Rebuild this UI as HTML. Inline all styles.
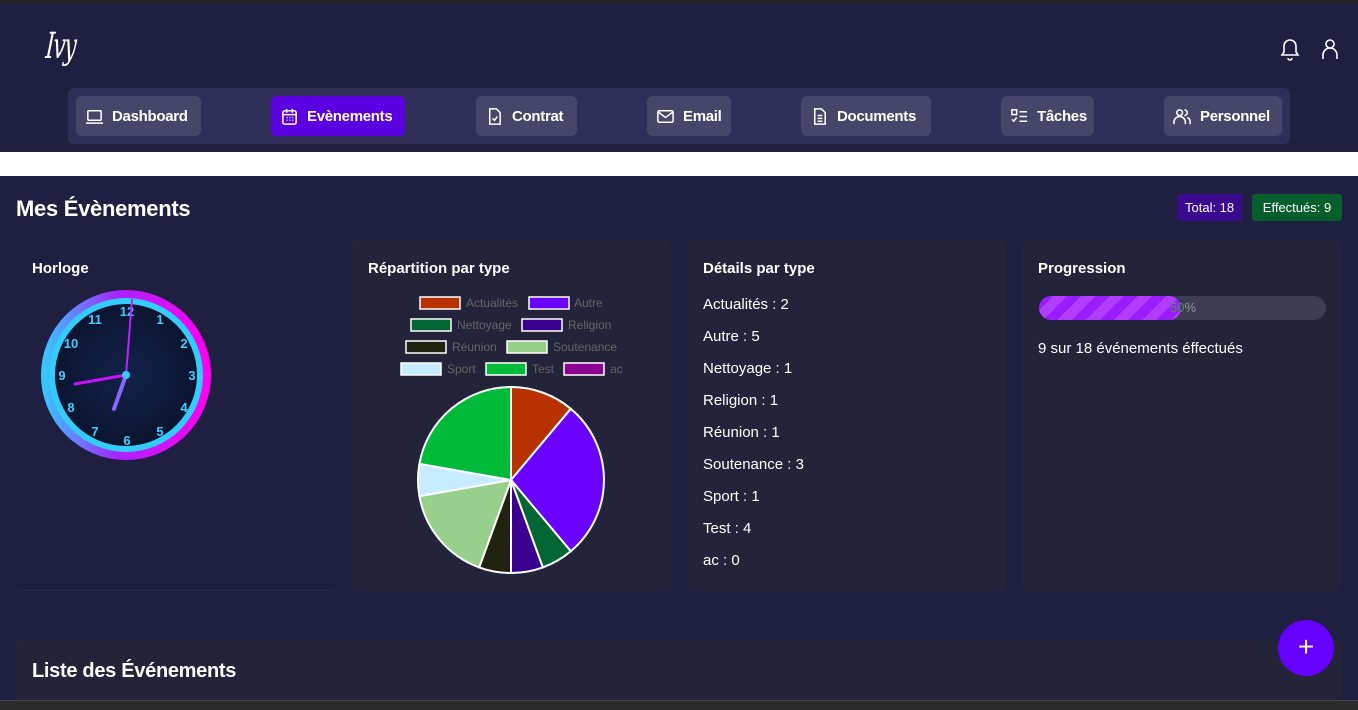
<!DOCTYPE html>
<html><head><meta charset="utf-8"><style>
*{margin:0;padding:0;box-sizing:border-box}
body{width:1358px;height:710px;overflow:hidden;background:#1f1f42;font-family:"Liberation Sans","DejaVu Sans",sans-serif;color:#fff;position:relative}
.abs{position:absolute}
.top{left:0;top:0;width:1358px;height:4px;background:#232323}
.nav{left:68px;top:88px;width:1222px;height:56px;background:#2f2f5a;border-radius:6px}
.btn{position:absolute;top:96px;height:40px;background:#46466a;border-radius:6px;display:flex;align-items:center;padding-left:9px;font-weight:bold;font-size:15px;letter-spacing:-0.3px}
.btn svg{width:19px;height:19px;margin-right:8px;fill:none;stroke:#fff;stroke-width:1.6}
.white{left:0;top:152px;width:1358px;height:24px;background:#fff}
.card{position:absolute;top:240px;width:319px;height:351px;background:#232339;border-radius:4px}
.card h3{position:absolute;left:16px;top:20px;font-size:15px;font-weight:bold}
.badge{position:absolute;top:194px;height:27px;border-radius:3px;font-size:13px;line-height:27px;padding:0 8px}
.det{position:absolute;left:16px;font-size:15px}
.leg{font-family:"Liberation Sans",sans-serif;font-size:12px;fill:#666}
</style></head><body>
<div class="abs top"></div>
<div class="abs" style="left:46px;top:26px;font-family:'DejaVu Serif','Liberation Serif',serif;font-style:italic;font-weight:normal;font-size:36px;transform:scaleX(0.6) skewX(-8deg);transform-origin:left;letter-spacing:-2px">Ivy</div>
<svg class="abs" style="left:1278px;top:36px" width="24" height="26" fill="none" stroke="#fff" stroke-width="1.6"><path d="M4 19h16l-2-3V10a6 6 0 0 0-12 0v6z"/><path d="M10 22a2 2 0 0 0 4 0"/></svg>
<svg class="abs" style="left:1320px;top:37px" width="20" height="24" fill="none" stroke="#fff" stroke-width="1.6"><circle cx="10" cy="7" r="4"/><path d="M3 22v-4a7 7 0 0 1 14 0v4"/></svg>
<div class="abs nav"></div>
<div class="btn" style="left:76px;width:125px"><svg viewBox="0 0 20 20"><rect x="3" y="4" width="14" height="10" rx="1"/><path d="M1 17h18"/></svg>Dashboard</div>
<div class="btn" style="left:271px;width:134px;background:#5b00e0"><svg viewBox="0 0 20 20"><rect x="3" y="4" width="14" height="14" rx="2"/><path d="M3 8h14M7 2v4M13 2v4M7 11h1M10 11h1M13 11h1M7 14h1M10 14h1M13 14h1"/></svg>Evènements</div>
<div class="btn" style="left:476px;width:101px"><svg viewBox="0 0 20 20"><path d="M5 2h7l4 4v12H5z"/><path d="M8 12l2 2 3-4"/></svg>Contrat</div>
<div class="btn" style="left:647px;width:84px"><svg viewBox="0 0 20 20"><rect x="2" y="4" width="16" height="12" rx="1.5"/><path d="M2 5l8 6 8-6"/></svg>Email</div>
<div class="btn" style="left:801px;width:130px"><svg viewBox="0 0 20 20"><path d="M5 2h7l4 4v12H5z"/><path d="M8 9h5M8 12h5M8 15h5"/></svg>Documents</div>
<div class="btn" style="left:1001px;width:93px"><svg viewBox="0 0 20 20"><rect x="2" y="3" width="5" height="5"/><path d="M2 13l2 2 3-4M10 5h8M10 10h8M10 15h8"/></svg>Tâches</div>
<div class="btn" style="left:1164px;width:118px"><svg viewBox="0 0 20 20"><circle cx="7" cy="6" r="3"/><path d="M1 18v-2a6 6 0 0 1 12 0v2M12 3a3 3 0 0 1 0 6M15 11a5 5 0 0 1 3 5v2"/></svg>Personnel</div>
<div class="abs white"></div>
<div class="abs" style="left:16px;top:196px;font-size:22px;font-weight:bold;letter-spacing:-0.3px">Mes Évènements</div>
<div class="badge" style="left:1177px;background:#3a0a8f">Total: 18</div>
<div class="badge" style="left:1252px;width:90px;background:#075e2d;text-align:center">Effectués: 9</div>

<div class="card" style="left:16px;background:#1f1f42;border-bottom:1px solid #2a2a48"><h3>Horloge</h3>
<svg class="abs" style="left:24px;top:48px" width="174" height="174">
<defs><linearGradient id="ring" x1="0" x2="1"><stop offset="0" stop-color="#33ccff"/><stop offset="0.45" stop-color="#aa22ff"/><stop offset="1" stop-color="#ff00ee"/></linearGradient>
<radialGradient id="dial"><stop offset="0" stop-color="#13224a"/><stop offset="1" stop-color="#0b1530"/></radialGradient></defs>
<circle cx="86" cy="87" r="85" fill="url(#ring)"/>
<circle cx="86" cy="87" r="77" fill="#33ccff"/>
<circle cx="86" cy="87" r="71" fill="url(#dial)"/>
<g fill="#44ccff" font-size="13" font-weight="bold" text-anchor="middle" font-family="Liberation Sans">
<text x="87" y="28">12</text><text x="120" y="36">1</text><text x="144" y="60">2</text><text x="152" y="92">3</text><text x="144" y="124">4</text><text x="120" y="148">5</text><text x="87" y="157">6</text><text x="55" y="148">7</text><text x="31" y="124">8</text><text x="22" y="92">9</text><text x="31" y="60">10</text><text x="55" y="36">11</text></g>
<line x1="86" y1="87" x2="92" y2="12" stroke="#bb22ff" stroke-width="2" stroke-linecap="round"/>
<line x1="86" y1="87" x2="35" y2="96" stroke="#cc11ff" stroke-width="3" stroke-linecap="round"/>
<line x1="86" y1="87" x2="74" y2="121" stroke="#8866ff" stroke-width="4" stroke-linecap="round"/>
<circle cx="86" cy="87" r="4" fill="#33ccff"/>
</svg></div>

<div class="card" style="left:352px"><h3>Répartition par type</h3>
<svg class="abs" style="left:0;top:0" width="319" height="351">
<g stroke="#fff" stroke-width="1.5">
<rect x="68" y="57" width="40" height="12" fill="#b83200"/><rect x="177" y="57" width="40" height="12" fill="#6a00ff"/>
<rect x="59" y="79" width="40" height="12" fill="#006633"/><rect x="170" y="79" width="40" height="12" fill="#3a0090"/>
<rect x="54" y="101" width="40" height="12" fill="#222211"/><rect x="155" y="101" width="40" height="12" fill="#96d08a"/>
<rect x="49" y="123" width="40" height="12" fill="#c8ecff"/><rect x="134" y="123" width="40" height="12" fill="#00bb3a"/><rect x="212" y="123" width="40" height="12" fill="#8a0090"/></g>
<g class="leg"><text x="114" y="67">Actualités</text><text x="222" y="67">Autre</text><text x="105" y="89">Nettoyage</text><text x="216" y="89">Religion</text><text x="100" y="111">Réunion</text><text x="201" y="111">Soutenance</text><text x="95" y="133">Sport</text><text x="180" y="133">Test</text><text x="258" y="133">ac</text></g>
<g stroke="#fff" stroke-width="2" transform="translate(-352,-240)">
<path d="M511 480L511 387A93 93 0 0 1 570.8 408.8Z" fill="#b83200"/>
<path d="M511 480L570.8 408.8A93 93 0 0 1 570.8 551.2Z" fill="#6a00ff"/>
<path d="M511 480L570.8 551.2A93 93 0 0 1 542.8 567.4Z" fill="#006633"/>
<path d="M511 480L542.8 567.4A93 93 0 0 1 511 573Z" fill="#3a0090"/>
<path d="M511 480L511 573A93 93 0 0 1 479.2 567.4Z" fill="#222211"/>
<path d="M511 480L479.2 567.4A93 93 0 0 1 419.4 496.1Z" fill="#96d08a"/>
<path d="M511 480L419.4 496.1A93 93 0 0 1 419.4 463.9Z" fill="#c8ecff"/>
<path d="M511 480L419.4 463.9A93 93 0 0 1 511 387Z" fill="#00bb3a"/>
</g></svg></div>

<div class="card" style="left:687px"><h3>Détails par type</h3>
<div class="det" style="top:56px">Actualités : 2</div>
<div class="det" style="top:88px">Autre : 5</div>
<div class="det" style="top:120px">Nettoyage : 1</div>
<div class="det" style="top:152px">Religion : 1</div>
<div class="det" style="top:184px">Réunion : 1</div>
<div class="det" style="top:216px">Soutenance : 3</div>
<div class="det" style="top:248px">Sport : 1</div>
<div class="det" style="top:280px">Test : 4</div>
<div class="det" style="top:312px">ac : 0</div>
</div>

<div class="card" style="left:1022px"><h3>Progression</h3>
<div class="abs" style="left:17px;top:56px;width:287px;height:24px;border-radius:12px;background:#3c3c55;overflow:hidden">
<div style="width:142px;height:24px;border-radius:12px;background:repeating-linear-gradient(135deg,#9a1cff 0 10px,#b23cff 10px 20px),#9a1cff"></div>
<div class="abs" style="left:131px;top:4px;font-size:13px;color:#999"><span style="color:#3a9a3a">50</span>%</div></div>
<div class="det" style="top:100px">9 sur 18 événements éffectués</div>
</div>

<div class="abs" style="left:16px;top:640px;width:1326px;height:70px;background:#232339;border-radius:4px"></div>
<div class="abs" style="left:32px;top:660px;font-size:20px;font-weight:bold;letter-spacing:-0.3px">Liste des Événements</div>
<div class="abs" style="left:1278px;top:620px;width:56px;height:56px;border-radius:50%;background:#6600ff;text-align:center;line-height:54px;font-size:28px">+</div>
<div class="abs" style="left:0;top:700px;width:1358px;height:10px;background:#2b2b2b;border-top:1px solid #444"></div>
</body></html>
